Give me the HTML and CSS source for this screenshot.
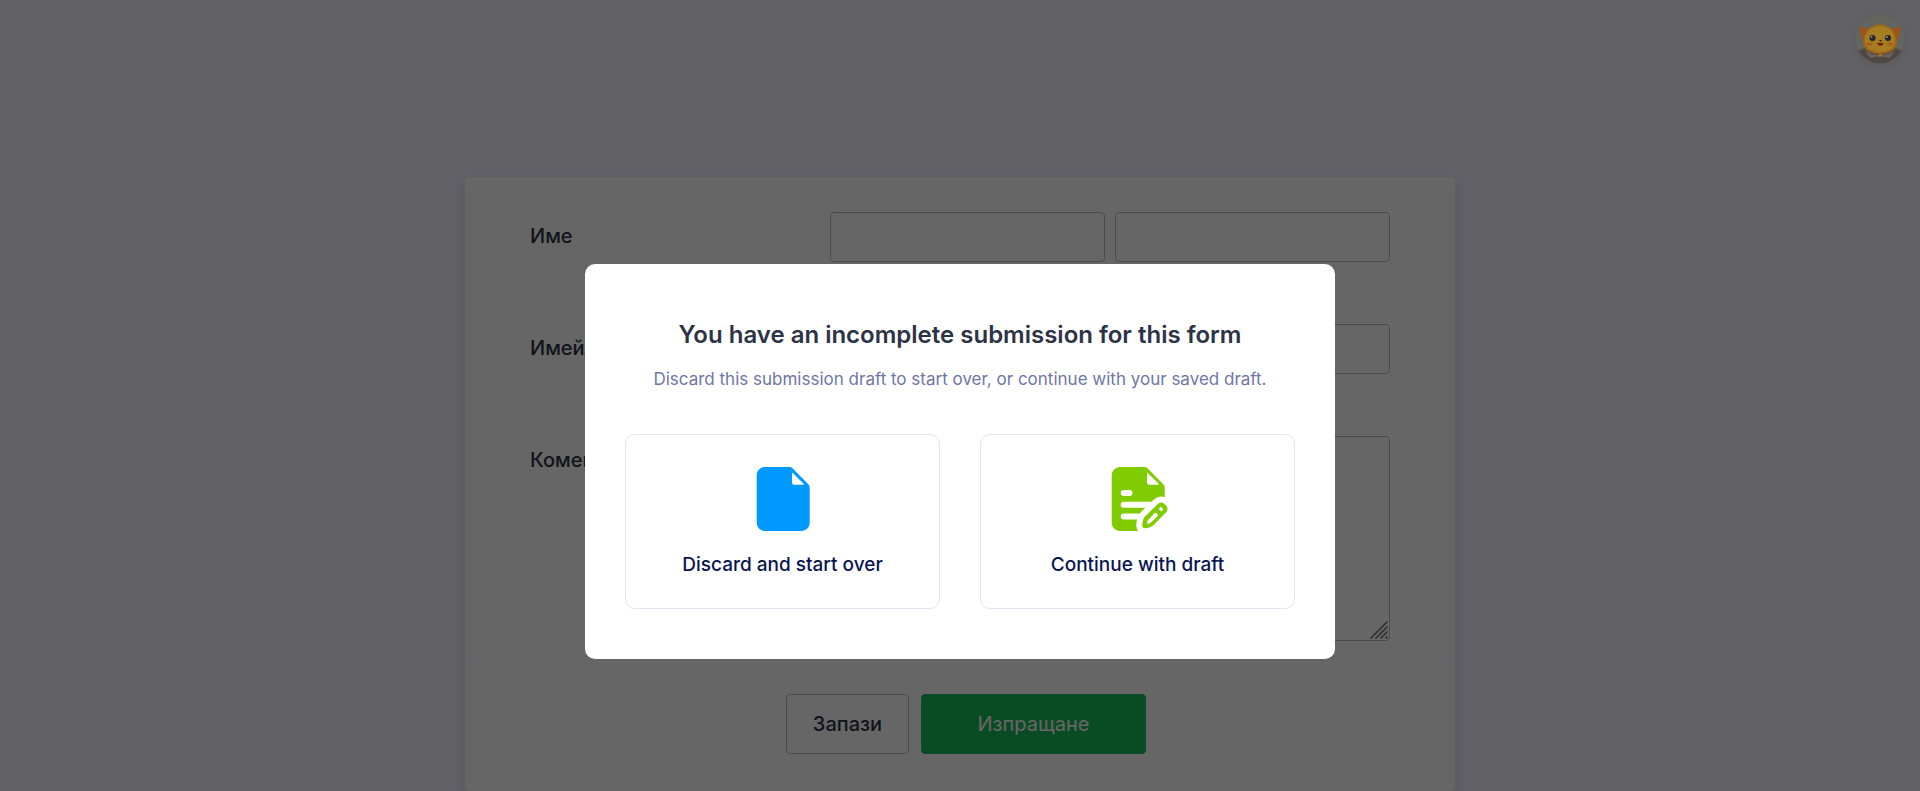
FILE: index.html
```html
<!DOCTYPE html>
<html lang="bg">
<head>
  <meta charset="UTF-8" />
  <meta name="viewport" content="width=device-width, initial-scale=1.0"/>
  <title>Form</title>
  <link rel="stylesheet" href="styles.css">
</head>
<body>
  <form class="form-card">
    <div class="form-body">
      <div class="form-line">
        <label class="form-label" for="firstName">Име</label>
        <div class="form-input">
          <input type="text" id="firstName" class="textbox">
          <input type="text" id="lastName" class="textbox" aria-label="Фамилия">
        </div>
      </div>
      <div class="form-line">
        <label class="form-label" for="email">Имейл</label>
        <div class="form-input">
          <input type="email" id="email" class="textbox">
        </div>
      </div>
      <div class="form-line">
        <label class="form-label" for="comment">Коментар</label>
        <div class="form-input">
          <textarea id="comment" class="textbox textarea"></textarea>
          <svg class="grip" viewBox="0 0 18 18" aria-hidden="true">
            <path d="M0.5 17.5L17.5 0.5M5.5 17.5L17.5 5.5M10.5 17.5L17.5 10.5M15.5 17.5L17.5 15.5"/>
          </svg>
        </div>
      </div>
    </div>
    <div class="form-buttons">
      <button type="button" class="btn btn-save">Запази</button>
      <button type="submit" class="btn btn-submit">Изпращане</button>
    </div>
  </form>

  <div class="overlay">
    <div class="modal" role="dialog" aria-labelledby="modalTitle">
      <h1 class="modal-title" id="modalTitle">You have an incomplete submission for this form</h1>
      <p class="modal-text">Discard this submission draft to start over, or continue with your saved draft.</p>
      <div class="options">
        <button type="button" class="option">
          <svg class="option-icon" viewBox="0 0 64 64" aria-hidden="true">
            <path fill="#0099ff" fill-rule="evenodd" d="M14 0H38C39.5 0 40.5 .4 41.5 1.3L57.5 17.5C58.400 18.4 58.7 19.4 58.7 21V55.5C58.7 60.2 55 64 50.5 64H14C9.5 64 5.7 60.2 5.7 55.5V8.5C5.7 3.8 9.5 0 14 0ZM41 6.5V15.5C41 17 41.8 17.7 43 17.7H52C53 17.7 53 17.2 52.4 16.6L42 6.2C41.4 5.6 41 5.8 41 6.5Z"/>
          </svg>
          <span>Discard and start over</span>
        </button>
        <button type="button" class="option">
          <svg class="option-icon" viewBox="0 0 64 64" aria-hidden="true">
            <path fill="#80cc00" fill-rule="evenodd" d="M14 0H38C39.5 0 40.5 .4 41.5 1.3L57.5 17.5C58.4 18.4 58.7 19.4 58.7 21V34L34 64H14C9.5 64 5.7 60.2 5.7 55.5V8.5C5.7 3.8 9.5 0 14 0ZM41 6.5V15.5C41 17 41.8 17.7 43 17.7H52C53 17.7 53 17.2 52.4 16.6L42 6.2C41.4 5.6 41 5.8 41 6.5Z"/>
            <path fill="none" stroke="#fff" stroke-width="6" stroke-linecap="round" d="M17.7 26H23.5M17.7 37.7H46M17.7 49.4H36"/>
            <path fill="#80cc00" stroke="#fff" stroke-width="12" stroke-linejoin="round" paint-order="stroke" d="M36.3 58C36.5 53.5 37.5 51 39.5 49L51.5 37.3C54 35 56.5 35 59 37.5L59.8 38.3C62 40.5 62 43.5 60 45.5L47.5 58C45.5 60 43 61 38.7 61.2C37 61.2 36.2 60.3 36.3 58Z"/>
            <path fill="#fff" d="M41 56.8C41 54.8 41.5 53.5 42.6 52.4L48.7 46C49.2 45.5 49.8 45.5 50.3 46L51.6 47.3C52.1 47.8 52.1 48.4 51.6 48.9L45.5 55C44.3 56.2 43 56.8 41 56.8ZM53.2 41.2L54.3 40.3C54.7 39.9 55.1 39.9 55.5 40.3L56.9 41.8C57.3 42.2 57.3 42.6 56.9 43L55.9 44C55.5 44.4 55.1 44.4 54.7 44L53.2 42.5C52.8 42.1 52.8 41.6 53.2 41.2Z"/>
          </svg>
          <span>Continue with draft</span>
        </button>
      </div>
    </div>
  </div>

  <svg class="avatar" viewBox="0 0 50 50" role="img" aria-label="Avatar">
    <defs>
      <clipPath id="round"><circle cx="25" cy="25" r="24.5"/></clipPath>
    </defs>
    <circle cx="25" cy="25" r="24.5" fill="#63655e" stroke="#66605c"/>
    <g clip-path="url(#round)">
      <path fill="#504845" d="M3 38C7 34 11 33 15 35H35C39 33 43 34 47 38V50H3Z"/>
      <path fill="#6b625f" d="M11 36C14 40 19 41 25 41C31 41 36 40 39 36C39 39 37 42 34 44L26 42H24L16 44C13 42 11 39 11 36Z"/>
      <path fill="#9a5319" d="M5 13C10 13 14 15 17 17L9 28C6 24 5 18 5 13ZM45 13C40 13 36 15 33 17L41 28C44 24 45 18 45 13Z"/>
      <path fill="#a36c1b" d="M21 13C20 10 22 9 24 11C24 8 26 8 26 11C28 9 30 10 29 13Z"/>
      <path fill="#9c6518" d="M25 11C35 11 41 17 42 26C43 35 35 40 25 40C15 40 7 35 8 26C9 17 15 11 25 11Z"/>
      <path fill="#a57d22" d="M25 12C34 12 39 18 40 25C41 33 34 38 25 38C16 38 9 33 10 25C11 18 16 12 25 12Z"/>
      <ellipse cx="14.500" cy="30" rx="3" ry="2" fill="#a3651d"/>
      <ellipse cx="35.500" cy="30" rx="3" ry="2" fill="#a3651d"/>
      <circle cx="17.500" cy="24" r="3" fill="#20232a"/>
      <circle cx="33" cy="24" r="3" fill="#20232a"/>
      <circle cx="16.500" cy="23" r="1" fill="#8f9497"/>
      <circle cx="32" cy="23" r="1" fill="#8f9497"/>
      <path fill="#3b2015" d="M24 26H27L25.500 28Z"/>
      <path fill="#6d1f16" d="M22 29H28.500C28 32.500 23 32.500 22 29Z"/>
      <path fill="#a3701f" d="M23.500 40H27V43.500L25.300 42L23.500 43.500Z"/>
    </g>
  </svg>
</body>
</html>
```
FILE: styles.css
```css
:root {
  --text: #2c3345;
  --border: #b8bdc9;
  --radius: 4px;
}

* {
  box-sizing: border-box;
}

body {
  margin: 0;
  padding-top: 177px;
  background-color: #f5f2ff;
  color: var(--text);
  font-family: Inter, "Liberation Sans", sans-serif;
  font-size: 20px;
}

button, input, textarea {
  font-family: inherit;
  font-size: inherit;
}

.form-card {
  max-width: 990px;
  margin: 0 auto;
  background-color: #fff;
  border-radius: var(--radius);
  box-shadow: 0 4px 12px rgba(37, 45, 91, 0.15);
}

.form-body {
  display: flex;
  flex-direction: column;
  gap: 62px;
  padding: 35px 65px 15px;
}

.form-line {
  display: flex;
}

.form-label {
  width: 300px;
  padding-top: 12px;
  font-weight: 500;
  line-height: 24px;
}

.form-input {
  position: relative;
  display: flex;
  flex: 1;
  gap: 10px;
  min-width: 0;
}

.textbox {
  flex: 1;
  min-width: 0;
  height: 50px;
  padding: 0 10px;
  border: 1px solid var(--border);
  border-radius: var(--radius);
  background-color: #fff;
}

.textarea {
  height: 205px;
  padding: 10px;
  resize: none;
}

.grip {
  position: absolute;
  right: 2px;
  bottom: 2px;
  width: 18px;
  height: 18px;
  fill: none;
  stroke: #6b6b6b;
  stroke-width: 1.5;
}

.form-buttons {
  display: flex;
  justify-content: center;
  padding: 37px 0;
  border-top: 1px solid #f3f3fe;
}

.btn {
  height: 60px;
  margin-left: 12px;
  border: 1px solid var(--border);
  border-radius: var(--radius);
  cursor: pointer;
}

.btn-save {
  min-width: 123px;
  background-color: #fff;
  color: var(--text);
  font-weight: 500;
}

.btn-submit {
  min-width: 225px;
  border-color: #18bd5b;
  background-color: #18bd5b;
  color: #fff;
}

.overlay {
  position: fixed;
  inset: 0;
  display: flex;
  justify-content: center;
  align-items: flex-start;
  padding-top: 264px;
  background-color: rgba(0, 0, 0, 0.6);
}

.modal {
  width: 100%;
  max-width: 750px;
  padding: 55px 40px 50px;
  border-radius: 10px;
  background-color: #fff;
  text-align: center;
}

.modal-title {
  margin: 0 0 16px;
  font-size: 24px;
  font-weight: 600;
  line-height: 32px;
}

.modal-text {
  margin: 0 0 43px;
  color: #6f76a7;
  font-size: 17px;
  line-height: 24px;
}

.options {
  display: flex;
  gap: 40px;
}

.option {
  display: flex;
  flex: 1;
  flex-direction: column;
  align-items: center;
  gap: 21px;
  padding: 32px 20px 30px;
  border: 1px solid #e3e3f6;
  border-radius: 10px;
  background-color: #fff;
  color: #0a1551;
  font-size: 19px;
  font-weight: 500;
  line-height: 26px;
  cursor: pointer;
}

.option-icon {
  width: 64px;
  height: 64px;
}

.avatar {
  position: absolute;
  top: 14px;
  right: 15px;
  width: 50px;
  height: 50px;
  border-radius: 50%;
  box-shadow: 0 2px 6px rgba(0, 0, 0, 0.08);
}
```
